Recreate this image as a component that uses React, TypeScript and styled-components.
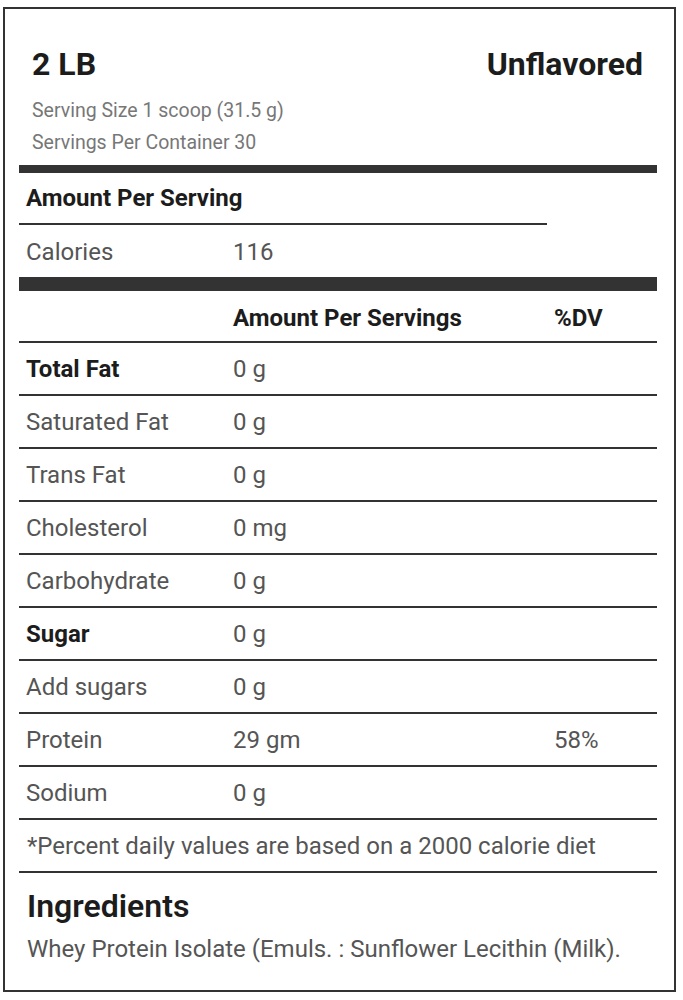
import React from "react";
import styled, { createGlobalStyle } from "styled-components";

const GlobalStyle = createGlobalStyle`
  html, body {
    margin: 0;
    padding: 0;
    background: #ffffff;
  }
  body {
    font-family: Roboto, "Open Sans", "Liberation Sans", sans-serif;
    color: #555555;
  }
`;

const Page = styled.div`
  padding: 7px 0 8px 3px;
`;

const Label = styled.section`
  box-sizing: border-box;
  width: 673px;
  height: 985px;
  border: 2px solid #333333;
  padding: 36px 17px 0 14px;
  background: #ffffff;
`;

const TitleRow = styled.div`
  display: flex;
  justify-content: space-between;
  align-items: baseline;
  padding: 0 14px 0 13px;
  font-size: 32px;
  font-weight: 700;
  line-height: 38px;
  color: #1c1c1c;
`;

const ServingInfo = styled.div`
  padding: 12px 0 0 13px;
`;

const ServingLine = styled.div`
  font-size: 19.5px;
  line-height: 32px;
  color: #777777;
`;

const Bar = styled.div<{ $h: number }>`
  height: ${(p) => p.$h}px;
  background: #333333;
  margin-top: ${(p) => (p.$h === 8 ? 6 : 0)}px;
`;

const TopTable = styled.div`
  width: 528px;
`;

const Row = styled.div<{ $h?: number; $line?: boolean; $pt?: number }>`
  box-sizing: border-box;
  display: grid;
  grid-template-columns: 207px 321px 1fr;
  align-items: center;
  height: ${(p) => p.$h ?? 53}px;
  padding-top: ${(p) => p.$pt ?? 0}px;
  border-bottom: ${(p) => (p.$line === false ? "none" : "2px solid #333333")};
`;

const Cell = styled.div<{ $bold?: boolean }>`
  padding-left: 7px;
  font-size: 24px;
  font-weight: ${(p) => (p.$bold ? 700 : 400)};
  color: ${(p) => (p.$bold ? "#1c1c1c" : "#555555")};
  line-height: 26px;
  white-space: nowrap;
`;

const Note = styled.div`
  box-sizing: border-box;
  height: 53px;
  display: flex;
  align-items: center;
  padding-left: 8px;
  font-size: 24px;
  line-height: 26px;
  color: #555555;
  border-bottom: 2px solid #333333;
  white-space: nowrap;
`;

const IngredientsTitle = styled.h2`
  margin: 14px 0 0 0;
  padding-left: 8px;
  font-size: 32px;
  font-weight: 600;
  line-height: 38px;
  color: #1c1c1c;
`;

const IngredientsText = styled.p`
  margin: 11px 0 0 0;
  padding-left: 8px;
  font-size: 24px;
  line-height: 26px;
  color: #555555;
  white-space: nowrap;
`;

type Nutrient = { name: string; amount: string; dv?: string; bold?: boolean };

const nutrients: Nutrient[] = [
  { name: "Total Fat", amount: "0 g", bold: true },
  { name: "Saturated Fat", amount: "0 g" },
  { name: "Trans Fat", amount: "0 g" },
  { name: "Cholesterol", amount: "0 mg" },
  { name: "Carbohydrate", amount: "0 g" },
  { name: "Sugar", amount: "0 g", bold: true },
  { name: "Add sugars", amount: "0 g" },
  { name: "Protein", amount: "29 gm", dv: "58%" },
  { name: "Sodium", amount: "0 g" },
];

export default function App() {
  return (
    <>
      <GlobalStyle />
      <Page>
        <Label>
          <TitleRow>
            <span>2 LB</span>
            <span>Unflavored</span>
          </TitleRow>
          <ServingInfo>
            <ServingLine>Serving Size 1 scoop (31.5 g)</ServingLine>
            <ServingLine>Servings Per Container 30</ServingLine>
          </ServingInfo>
          <Bar $h={8} />
          <TopTable>
            <Row $h={52}>
              <Cell $bold>Amount Per Serving</Cell>
            </Row>
            <Row $h={52} $line={false} $pt={2}>
              <Cell>Calories</Cell>
              <Cell>116</Cell>
            </Row>
          </TopTable>
          <Bar $h={14} />
          <Row $h={52} $pt={4}>
            <Cell />
            <Cell $bold>Amount Per Servings</Cell>
            <Cell $bold>%DV</Cell>
          </Row>
          {nutrients.map((n) => (
            <Row key={n.name}>
              <Cell $bold={n.bold}>{n.name}</Cell>
              <Cell>{n.amount}</Cell>
              <Cell>{n.dv ?? ""}</Cell>
            </Row>
          ))}
          <Note>*Percent daily values are based on a 2000 calorie diet</Note>
          <IngredientsTitle>Ingredients</IngredientsTitle>
          <IngredientsText>
            Whey Protein Isolate (Emuls. : Sunflower Lecithin (Milk).
          </IngredientsText>
        </Label>
      </Page>
    </>
  );
}
